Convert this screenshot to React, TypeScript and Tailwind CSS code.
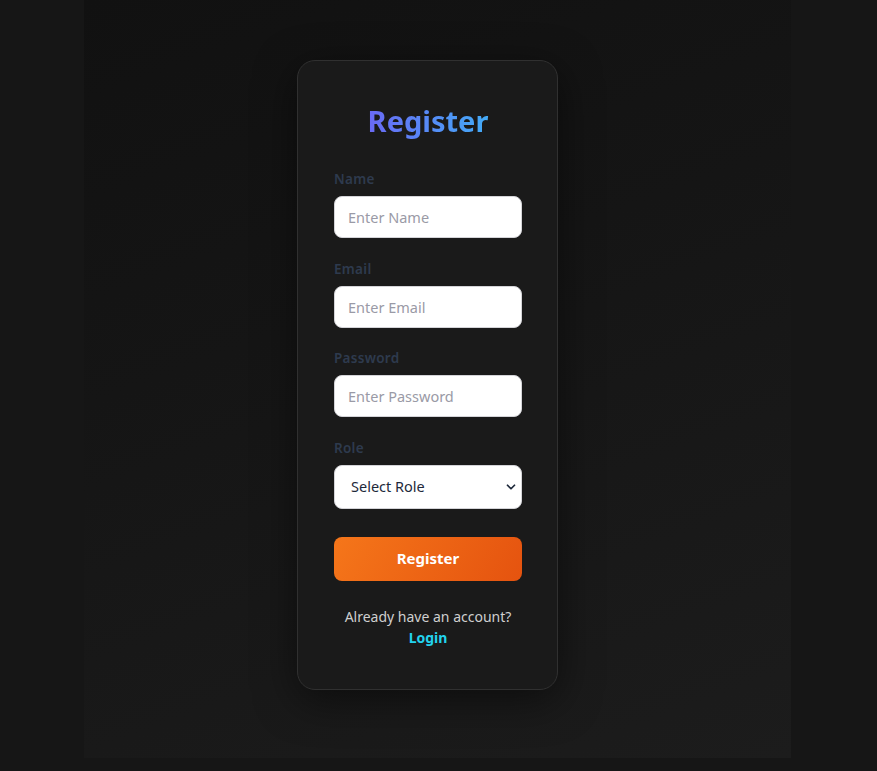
import { ChevronDown } from "lucide-react";

const font = { fontFamily: '"Noto Sans", "Open Sans", sans-serif' };

function Field({ label, placeholder, type = "text" }: { label: string; placeholder: string; type?: string }) {
  return (
    <div className="flex flex-col">
      <label className="mb-[7px] text-[13.5px] font-semibold leading-5 tracking-[0.3px] text-[#2e3a4e]">{label}</label>
      <input
        type={type}
        placeholder={placeholder}
        className="h-[42px] w-full rounded-lg border border-[#d4d4d8] bg-white px-[13px] text-[14.5px] text-[#1f2937] outline-none placeholder:text-[#9a9aa6]"
      />
    </div>
  );
}

export default function App() {
  return (
    <div className="h-[771px] w-full overflow-hidden bg-[#161616]" style={font}>
      <div className="ml-[84px] h-[758px] w-[707px] bg-[linear-gradient(160deg,#111111_0%,#151515_40%,#1c1c1c_100%)] pl-[213px] pt-[60px]">
        <div className="flex h-[630px] w-[261px] flex-col rounded-[18px] border border-[#303030] bg-[#1a1a1a] pl-9 pr-[35px] pt-[40px] shadow-[0_10px_40px_rgba(0,0,0,0.5)]">
          <h1 className="bg-[linear-gradient(to_right,#7557f4,#38bdf8)] bg-clip-text text-center text-[29px] font-bold leading-10 text-transparent">
            Register
          </h1>

          <div className="mt-[28px] flex flex-col gap-[20.5px]">
            <Field label="Name" placeholder="Enter Name" />
            <Field label="Email" placeholder="Enter Email" type="email" />
            <Field label="Password" placeholder="Enter Password" type="password" />
            <div className="flex flex-col">
              <label className="mb-[7px] text-[13.5px] font-semibold leading-5 tracking-[0.3px] text-[#2e3a4e]">Role</label>
              <div className="relative">
                <select className="h-[44px] w-full appearance-none rounded-lg border border-[#d4d4d8] bg-white pl-4 text-[14.5px] text-[#1e293b] outline-none">
                  <option>Select Role</option>
                  <option>User</option>
                  <option>Admin</option>
                </select>
                <ChevronDown className="pointer-events-none absolute right-[4px] top-[15px] h-[14px] w-[14px] text-[#1e293b]" strokeWidth={3} />
              </div>
            </div>
          </div>

          <button className="mt-[28px] h-[44px] w-full rounded-lg bg-[linear-gradient(120deg,#f5761a,#e5530f)] text-[15px] font-bold text-white">
            Register
          </button>

          <div className="mt-[25px] text-center text-[14px] leading-[21px] text-[#cfcfcf]">
            <p>Already have an account?</p>
            <a href="#" className="font-bold text-[#22d3ee]">Login</a>
          </div>
        </div>
      </div>
    </div>
  );
}
